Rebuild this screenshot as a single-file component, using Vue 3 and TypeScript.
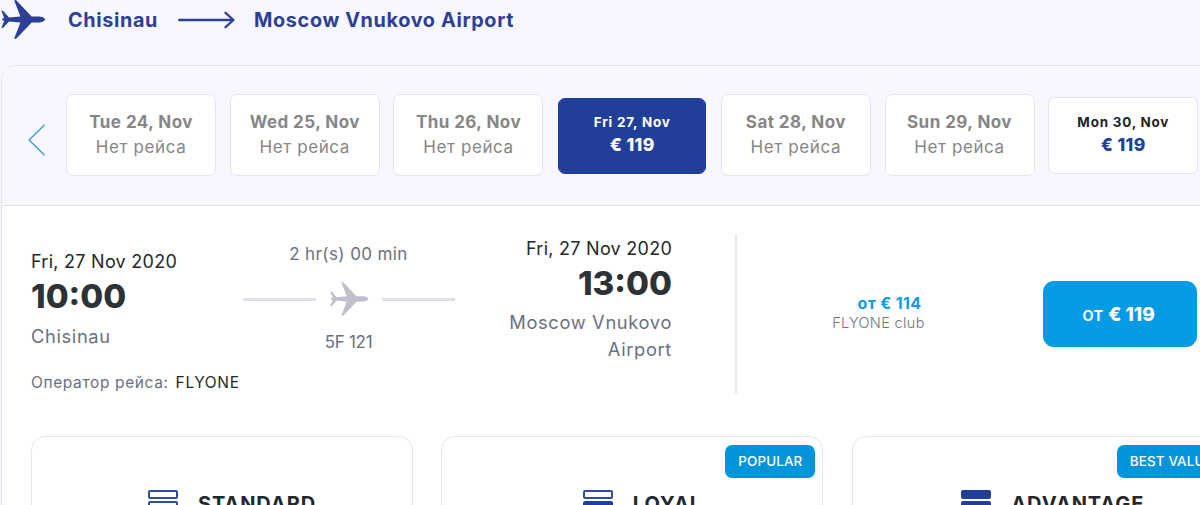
<script setup lang="ts">
interface DayOption {
  label: string
  price?: string
  active?: boolean
}

interface Fare {
  name: string
  level: number
  badge?: string
}

const planePath =
  'M14.2 0.6 Q15.4 -0.6 17.2 1.2 L31.6 16.4 L39.5 16.5 Q44.8 17.3 45 19.4 Q44.8 21.6 39.5 22.4 L31.6 22.6 L17.2 37.8 Q15.4 39.6 14.2 38.4 L20.4 22.5 L9 21.4 L3.2 27.8 L1.2 28.2 L4.2 20.8 L2.4 20.4 L2.4 18.5 L4.2 18.1 L1.2 10.6 L3.2 11 L9 17.5 L20.4 16.4 Z'

const days: DayOption[] = [
  { label: 'Tue 24, Nov' },
  { label: 'Wed 25, Nov' },
  { label: 'Thu 26, Nov' },
  { label: 'Fri 27, Nov', price: '€ 119', active: true },
  { label: 'Sat 28, Nov' },
  { label: 'Sun 29, Nov' },
  { label: 'Mon 30, Nov', price: '€ 119' },
]

// level = number of filled bars, counted from the bottom
const fares: Fare[] = [
  { name: 'STANDARD', level: 1 },
  { name: 'LOYAL', level: 2, badge: 'POPULAR' },
  { name: 'ADVANTAGE', level: 3, badge: 'BEST VALUE' },
]
</script>

<template>
  <main class="page">
    <header class="route">
      <svg class="route-plane" viewBox="0 0 46 40" width="46" height="40">
        <path :d="planePath" />
      </svg>
      <h2 class="route-from">Chisinau</h2>
      <svg class="route-arrow" viewBox="0 0 58 18" width="58" height="18">
        <path d="M1.2 9 H55 M47.5 1.8 L55.5 9 L47.5 16.2" />
      </svg>
      <h2 class="route-to">Moscow Vnukovo Airport</h2>
    </header>

    <section class="results">
      <nav class="days">
        <button class="prev" type="button" aria-label="Previous">
          <svg viewBox="0 0 18 32" width="18" height="32">
            <path d="M16.6 0.8 L1.2 16 L16.6 31.2" />
          </svg>
        </button>
        <div
          v-for="day in days"
          :key="day.label"
          class="day"
          :class="{ priced: day.price, active: day.active }"
        >
          <span class="day-label">{{ day.label }}</span>
          <span v-if="day.price" class="day-price">{{ day.price }}</span>
          <span v-else class="day-empty">Нет рейса</span>
        </div>
      </nav>

      <div class="flight">
        <div class="departure">
          <span class="date">Fri, 27 Nov 2020</span>
          <span class="time">10:00</span>
          <span class="city">Chisinau</span>
          <span class="operator">Оператор рейса: <b>FLYONE</b></span>
        </div>

        <div class="duration">
          <span class="length">2 hr(s) 00 min</span>
          <div class="track">
            <i />
            <svg viewBox="0 0 46 40" width="40" height="34.8">
              <path :d="planePath" />
            </svg>
            <i />
          </div>
          <span class="number">5F 121</span>
        </div>

        <div class="arrival">
          <span class="date">Fri, 27 Nov 2020</span>
          <span class="time">13:00</span>
          <span class="city">Moscow Vnukovo Airport</span>
        </div>

        <div class="club">
          <span class="club-price">от € 114</span>
          <span class="club-name">FLYONE club</span>
        </div>

        <button class="select" type="button"><span>от</span> <b>€ 119</b></button>
      </div>

      <div class="fares">
        <article v-for="fare in fares" :key="fare.name" class="fare">
          <span v-if="fare.badge" class="badge">{{ fare.badge }}</span>
          <div class="fare-head">
            <span class="bars">
              <i v-for="n in 3" :key="n" :class="{ filled: n > 3 - fare.level }" />
            </span>
            <h3>{{ fare.name }}</h3>
          </div>
        </article>
      </div>
    </section>
  </main>
</template>

<style>
body {
  margin: 0;
  overflow: hidden;
}
</style>

<style scoped>
.page {
  width: 1200px;
  height: 505px;
  overflow: hidden;
  background: #f7f7ff;
  font-family: Inter, "Noto Sans", sans-serif;
  color: #23282c;
}

.route {
  display: flex;
  align-items: center;
  height: 39px;
  margin-bottom: 26px;
  color: #2c3f95;
}

.route-plane {
  fill: #2c3f95;
}

.route h2 {
  margin: 0;
  font-size: 19.8px;
  line-height: 26px;
  font-weight: 650;
  letter-spacing: 0.65px;
  white-space: nowrap;
}

.route .route-from {
  width: 90px;
  margin-left: 22px;
}

.route-arrow {
  margin: 1px 19px 0 20px;
  fill: none;
  stroke: #2c3f95;
  stroke-width: 2.3;
  stroke-linecap: round;
  stroke-linejoin: round;
}

.route .route-to {
  margin-left: -1px;
}

.results {
  width: 1260px;
  height: 600px;
  margin-left: 1px;
  box-sizing: border-box;
  border: 1px solid #e4e4ef;
  border-radius: 14px;
  overflow: hidden;
  background: #fff;
}

.days {
  display: flex;
  align-items: center;
  height: 140px;
  box-sizing: border-box;
  border-bottom: 1px solid #e2e2ec;
  background: #f7f7ff;
}

.prev {
  width: 18px;
  height: 32px;
  margin: 8px 20.1px 0 26px;
  padding: 0;
  border: 0;
  background: none;
}

.prev svg {
  display: block;
  fill: none;
  stroke: #459ce0;
  stroke-width: 1.5;
}

.day {
  display: flex;
  flex-direction: column;
  align-items: center;
  flex: none;
  width: 150px;
  height: 82px;
  margin-right: 13.7px;
  margin-bottom: 1px;
  padding-top: 15px;
  box-sizing: border-box;
  border: 1px solid #e4e4f0;
  border-radius: 7px;
  background: #fff;
  color: #868686;
  white-space: nowrap;
}

.day-label {
  font-size: 17px;
  line-height: 24px;
  font-weight: 700;
  letter-spacing: 0.45px;
}

.day-empty {
  font-size: 17px;
  line-height: 27px;
  letter-spacing: 0.6px;
}

.day.priced {
  height: 77px;
  padding-top: 12px;
  color: #202427;
}

.priced .day-label {
  font-size: 13.4px;
  font-weight: 700;
  letter-spacing: 0.8px;
}

.day-price {
  color: #213f99;
  font-size: 17.5px;
  line-height: 22px;
  font-weight: 800;
  letter-spacing: 0.4px;
}

.day.active {
  width: 148px;
  height: 76px;
  margin-top: 1px;
  margin-left: 1px;
  margin-right: 14.7px;
  padding-top: 11px;
  border-color: #213f99;
  background: #213f99;
  color: #fff;
}

.active .day-price {
  color: #fff;
}

.flight {
  display: flex;
  height: 230px;
}

.flight > div {
  display: flex;
  flex-direction: column;
  box-sizing: border-box;
  white-space: nowrap;
}

.departure {
  width: 241px;
  padding: 43px 0 0 29px;
}

.date {
  font-size: 18px;
  line-height: 25px;
  letter-spacing: 0.26px;
}

.time {
  height: 43px;
  color: #2c3236;
  font-size: 33.2px;
  line-height: 44px;
  font-weight: 800;
}

.city {
  margin-top: 6px;
  color: #6b7080;
  font-size: 18.3px;
  line-height: 27px;
  letter-spacing: 0.65px;
}

.operator {
  margin-top: 21px;
  color: #6b7080;
  font-size: 15.5px;
  line-height: 24px;
  letter-spacing: 0.62px;
}

.operator b {
  margin-left: 2px;
  color: #23282c;
  font-weight: 400;
}

.duration {
  align-items: center;
  width: 211px;
  margin-right: 1px;
  padding-top: 36px;
  color: #6b7080;
  font-size: 17px;
}

.length,
.number {
  line-height: 24px;
}

.length {
  letter-spacing: 0.4px;
}

.number {
  letter-spacing: -0.3px;
}

.track {
  display: flex;
  align-items: center;
  justify-content: space-between;
  width: 212px;
  height: 40px;
  margin: 13px 0 11px;
}

.track i {
  width: 73px;
  height: 3px;
  background: #dfdfec;
}

.track svg {
  fill: #c0c0cd;
}

.arrival {
  align-items: flex-end;
  width: 217px;
  padding-top: 30px;
  text-align: right;
}

.arrival .city {
  width: 180px;
  margin-top: 5px;
  white-space: normal;
}

.club {
  align-items: center;
  width: 254px;
  height: 160px;
  margin: 28px 0 0 63px;
  padding: 60px 0 0 31px;
  border-left: 2px solid #e9e9ed;
}

.club-price {
  margin-left: 22px;
  color: #0d9be6;
  font-size: 16px;
  line-height: 19px;
  font-weight: 750;
  letter-spacing: 0.35px;
}

.club-name {
  color: #6f7480;
  font-size: 14.5px;
  line-height: 19px;
  font-weight: 300;
  letter-spacing: 0.35px;
}

.select {
  width: 154px;
  height: 66px;
  margin: 75px 0 0 54px;
  padding: 1px 3px 0 0;
  border: 0;
  border-radius: 11px;
  background: #059ce5;
  color: #fff;
  font-family: inherit;
  font-size: 19px;
}

.select span {
  font-weight: 500;
}

.select b {
  font-weight: 800;
}

.fares {
  display: flex;
  gap: 28.4px;
  padding-left: 29px;
}

.fare {
  position: relative;
  flex: none;
  width: 382px;
  height: 180px;
  box-sizing: border-box;
  border: 1px solid #e4e4f0;
  border-radius: 14px;
  background: #fff;
}

.badge {
  position: absolute;
  top: 8px;
  right: 7px;
  padding: 0 13px;
  border-radius: 7px;
  background: #0394da;
  color: #fff;
  font-size: 13.4px;
  line-height: 33px;
  font-weight: 500;
  letter-spacing: 0.15px;
}

.fare-head {
  display: flex;
  justify-content: center;
  padding: 52px 0 0 20px;
}

.bars {
  display: flex;
  flex-direction: column;
  gap: 2px;
  width: 30px;
  margin: 1px 20px 0 0;
}

.bars i {
  height: 9px;
  box-sizing: border-box;
  border: 2px solid #2f4da4;
  border-radius: 2px;
}

.bars i.filled {
  border-color: #213f99;
  background: #213f99;
}

.fare-head h3 {
  margin: 2px 0 0;
  font-size: 20px;
  line-height: 26px;
  font-weight: 700;
  letter-spacing: 0.9px;
}
</style>
